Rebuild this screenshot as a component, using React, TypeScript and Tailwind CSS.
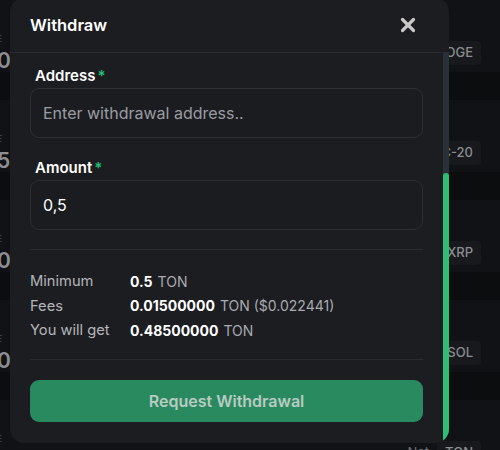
import { X } from "lucide-react";

const rows = [
  { left: "00", badge: "DOGE" },
  { left: "5", badge: "BRC-20" },
  { left: "00", badge: "XRP" },
  { left: "00", badge: "SOL" },
  { left: "", badge: "TON" },
];

function Background() {
  return (
    <div className="flex flex-col">
      {rows.map((r, i) => (
        <div key={i} className="h-[100px] flex flex-col">
          <div className="h-[72px] bg-[#111215] flex items-start justify-between pt-[34px]">
            <div className="flex flex-col -ml-[3px] leading-none">
              <span className="text-[9px] text-[#4a4c51]">E</span>
              <span className="text-[21px] font-semibold text-[#8c8e93] mt-[7px]">{r.left}</span>
            </div>
            <div className="flex items-center gap-2 mr-[19px] mt-[7px]">
              {i === 4 && <span className="text-[13px] text-[#6d7075]">Net</span>}
              <span className="px-2 py-[2px] rounded bg-[#18191c] text-[13px] font-medium text-[#8a8d92]">
                {r.badge}
              </span>
            </div>
          </div>
          <div className="h-[28px] bg-[#0c0d0f]" />
        </div>
      ))}
    </div>
  );
}

function InfoRow({ label, value, extra }: { label: string; value: string; extra: string }) {
  return (
    <div className="flex items-center h-[24.5px]">
      <span className="w-[100px] text-[14.7px] text-[#b3b5ba]">{label}</span>
      <span className="text-[14px] font-bold text-white">{value}</span>
      <span className="ml-[5px] text-[14px] text-[#a9abb0]">{extra}</span>
    </div>
  );
}

export default function App() {
  return (
    <div
      className="relative w-[500px] h-[450px] overflow-hidden bg-[#0e0f11]"
      style={{ fontFamily: "Inter, 'Noto Sans', sans-serif" }}
    >
      <Background />

      {/* modal */}
      <div className="absolute left-[10px] top-[-2px] w-[439px] h-[445px] rounded-[14px] bg-[#1c1d21] overflow-hidden flex flex-col">
        <div className="h-[55px] shrink-0 flex items-center justify-between pl-[20px] pr-[30px] border-b border-[#2a2b30]">
          <h2 className="text-[16.5px] font-semibold text-white pt-[1px]">Withdraw</h2>
          <X size={22} strokeWidth={3.5} className="text-[#c8c8c8]" />
        </div>

        <div className="flex-1 flex">
          <div className="flex-1 pl-[20px] pr-[20px] pt-[13px]">
            <label className="block ml-[5px] text-[15px] font-semibold text-white leading-5">
              Address<span className="text-[#22c07a] ml-[2px]">*</span>
            </label>
            <input
              className="mt-[2px] w-full h-[50px] rounded-[9px] border border-[#2e2f34] bg-[#1b1c20] px-[12px] text-[16px] text-white placeholder:text-[#9a9ca2] outline-none"
              placeholder="Enter withdrawal address.."
            />

            <label className="block mt-[20px] ml-[5px] text-[15px] font-semibold text-white leading-5">
              Amount<span className="text-[#22c07a] ml-[2px]">*</span>
            </label>
            <input
              className="mt-[2px] w-full h-[50px] rounded-[9px] border border-[#2e2f34] bg-[#1b1c20] px-[12px] text-[16px] text-white outline-none"
              defaultValue="0,5"
            />

            <div className="mt-[19px] border-t border-[#2a2b30]" />

            <div className="pt-[19px] pb-[16px]">
              <InfoRow label="Minimum" value="0.5" extra="TON" />
              <InfoRow label="Fees" value="0.01500000" extra="TON ($0.022441)" />
              <InfoRow label="You will get" value="0.48500000" extra="TON" />
            </div>

            <div className="border-t border-[#2a2b30]" />

            <button className="mt-[20px] w-full h-[42px] rounded-[9px] bg-[#2a8a5f] text-[16px] font-semibold text-[#b9cbc2]">
              Request Withdrawal
            </button>
          </div>

          {/* scrollbar */}
          <div className="w-[6px] flex flex-col bg-[#2a3038]">
            <div className="h-[120px]" />
            <div className="flex-1 bg-[#2ebd72] rounded-t-[3px]" />
          </div>
        </div>
      </div>
    </div>
  );
}
